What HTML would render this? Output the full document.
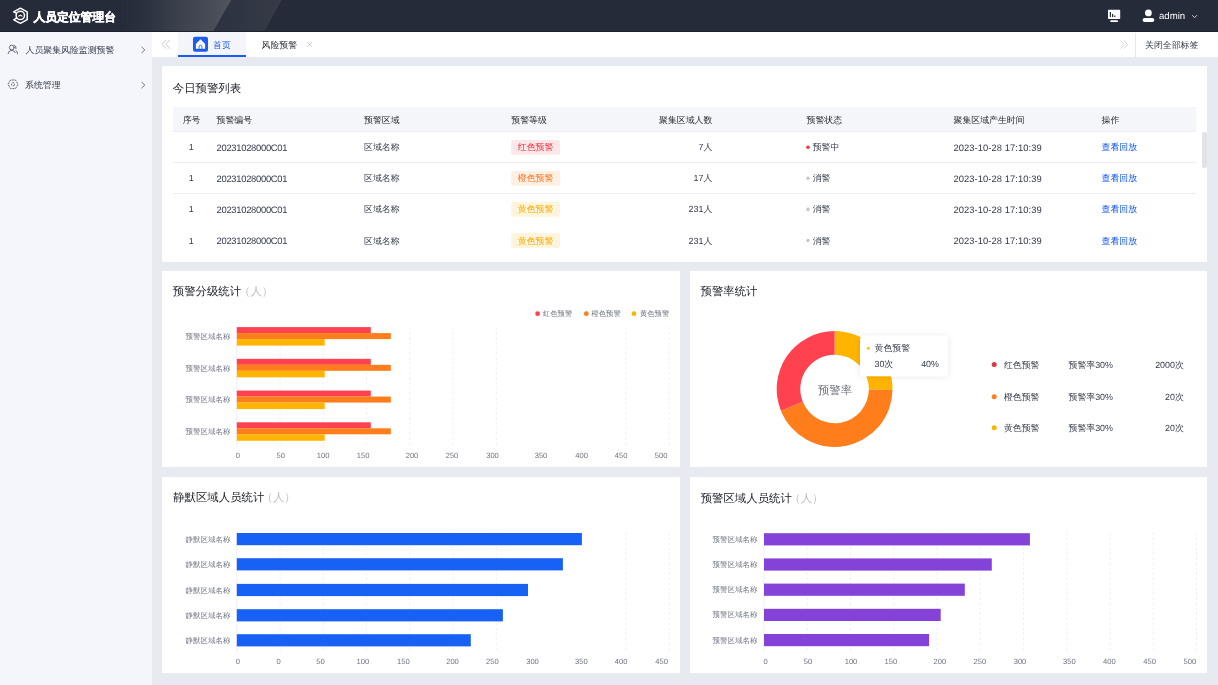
<!DOCTYPE html><html><head><meta charset="utf-8"><style>
html,body{margin:0;padding:0;width:1218px;height:685px;overflow:hidden;background:#e7eaf0;font-family:"Liberation Sans",sans-serif;}
.b{position:absolute;}
svg{position:absolute;left:0;top:0;will-change:transform;}
text{font-family:"Liberation Sans",sans-serif;text-rendering:geometricPrecision;}
</style></head><body>
<div class="b" style="left:0px;top:0px;width:1218px;height:32px;background:#262b39;"></div>
<div class="b" style="left:0px;top:32px;width:152px;height:653px;background:#f4f6fb;"></div>
<div class="b" style="left:152px;top:32px;width:1066px;height:25px;background:#ffffff;"></div>
<div class="b" style="left:178px;top:32px;width:68px;height:25px;background:#f3f5fa;"></div>
<div class="b" style="left:178px;top:55px;width:68px;height:2px;background:#1d5cf0;"></div>
<div class="b" style="left:1135px;top:33px;width:1px;height:24px;background:#e6e8ee;"></div>
<div class="b" style="left:162px;top:66px;width:1045px;height:196px;background:#ffffff;"></div>
<div class="b" style="left:162px;top:271px;width:518px;height:196px;background:#ffffff;"></div>
<div class="b" style="left:690px;top:271px;width:517px;height:196px;background:#ffffff;"></div>
<div class="b" style="left:162px;top:477px;width:518px;height:196px;background:#ffffff;"></div>
<div class="b" style="left:690px;top:477px;width:517px;height:196px;background:#ffffff;"></div>
<div class="b" style="left:173px;top:107px;width:1023px;height:24.400000000000006px;background:#f5f6fa;"></div>
<div class="b" style="left:173px;top:130.7px;width:1023px;height:1.0px;background:#eceef3;"></div>
<div class="b" style="left:173px;top:161.8px;width:1023px;height:1.0px;background:#eceef3;"></div>
<div class="b" style="left:173px;top:192.5px;width:1023px;height:1.0px;background:#eceef3;"></div>
<div class="b" style="left:1202.2px;top:131.8px;width:4.399999999999864px;height:36.099999999999994px;background:#e2e3e6;border-radius:2px;"></div>
<svg width="1218" height="685" viewBox="0 0 1218 685"><defs>
<linearGradient id="g1" x1="0" y1="0" x2="1" y2="0"><stop offset="0" stop-color="#262b39" stop-opacity="0"/><stop offset="0.45" stop-color="#363b48"/><stop offset="1" stop-color="#4f545e"/></linearGradient>
<linearGradient id="g2" x1="0" y1="0" x2="1" y2="0"><stop offset="0" stop-color="#2c3140"/><stop offset="1" stop-color="#363b47"/></linearGradient>
</defs><polygon points="110,0 231.5,0 213,32 110,32" fill="url(#g1)"/><polygon points="231.5,0 281.7,0 264,32 213,32" fill="url(#g2)"/><rect x="0" y="31" width="1218" height="1" fill="#1d212d"/><g fill="none" stroke="#fff" stroke-width="1.5" stroke-linejoin="round" stroke-linecap="round"><path d="M16.3 13.1 L13.6 11.8 L20.4 8.2 L27.2 11.8 L27.2 19.7 L20.4 23.3 L13.8 19.8 L16.8 17.9"/><circle cx="20.3" cy="15.4" r="4.2"/></g><path d="M18.3 16.2 Q20.3 13.6 22.4 16.2 Q20.3 15.3 18.3 16.2Z" fill="#fff" stroke="#fff" stroke-width="0.6"/><text x="33.4" y="16.5" font-size="11.8" fill="#ffffff" text-anchor="start" dominant-baseline="central" font-weight="bold" stroke="#fff" stroke-width="0.35">人员定位管理台</text><rect x="1108" y="9.8" width="12.2" height="9.2" fill="#fff" rx="0.8"/><rect x="1110.2" y="20.2" width="7.8" height="1.9" fill="#fff" rx="0.9"/><rect x="1109.8" y="12" width="1.2" height="5" fill="#262b39"/><rect x="1112" y="14" width="1.2" height="3" fill="#262b39"/><rect x="1114.2" y="15.5" width="1.2" height="1.5" fill="#262b39"/><circle cx="1148.4" cy="12.9" r="3.4" fill="#fff"/><rect x="1142.6" y="17.9" width="11.7" height="4.2" rx="2.1" fill="#fff"/><text x="1159" y="16.5" font-size="9.6" fill="#ffffff" text-anchor="start" dominant-baseline="central" font-weight="normal" >admin</text><path d="M1192.2 15.2 L1194.6 17.6 L1197 15.2" fill="none" stroke="#fff" stroke-width="0.8"/><g fill="none" stroke="#4a5060" stroke-width="0.85" stroke-linecap="round"><circle cx="11.8" cy="47.5" r="2.4"/><path d="M8.1 53.6 Q8.5 50.4 11.8 50.3 Q14.4 50.4 15.2 52.6"/><path d="M14.5 45.2 Q16.4 46 16 48.6"/><path d="M16.1 50.6 Q17.3 51.6 17.6 53.8"/></g><text x="25.6" y="50.4" font-size="8.9" fill="#333948" text-anchor="start" dominant-baseline="central" font-weight="normal" >人员聚集风险监测预警</text><path d="M141.5 46.8 L144.8 49.9 L141.5 53" fill="none" stroke="#50555f" stroke-width="0.8"/><g fill="none" stroke="#4a5060" stroke-width="0.85" stroke-dasharray="2.2,0.8"><path d="M8 84.3 L10.5 80 L15.5 80 L18 84.3 L15.5 88.6 L10.5 88.6 Z"/><circle cx="13" cy="84.3" r="1.6"/></g><text x="25" y="85.3" font-size="8.9" fill="#333948" text-anchor="start" dominant-baseline="central" font-weight="normal" >系统管理</text><path d="M141.5 82 L144.8 85.1 L141.5 88.2" fill="none" stroke="#50555f" stroke-width="0.8"/><path d="M166.4 40 L162 44.3 L166.4 48.6 M170 40 L165.6 44.3 L170 48.6" fill="none" stroke="#b8bcc6" stroke-width="0.8"/><rect x="193" y="36.8" width="15" height="15" rx="2" fill="#1d5cf0"/><path d="M195.9 44.1 L200.5 39.3 L205.1 44.1 L205.1 48.8 L195.9 48.8Z" fill="#fff"/><path d="M199.1 48.8 L199.1 46.3 Q199.1 45.3 200.5 45.3 Q201.9 45.3 201.9 46.3 L201.9 48.8" fill="none" stroke="#1d5cf0" stroke-width="0.9"/><text x="213" y="45" font-size="8.9" fill="#1d5cf0" text-anchor="start" dominant-baseline="central" font-weight="normal" >首页</text><text x="261.6" y="44.8" font-size="8.9" fill="#1f2329" text-anchor="start" dominant-baseline="central" font-weight="normal" >风险预警</text><path d="M307.3 42 L312 46.8 M312 42 L307.3 46.8" stroke="#b8bcc6" stroke-width="0.8"/><path d="M1120.5 40.5 L1124 44.5 L1120.5 48.5 M1124 40.5 L1127.5 44.5 L1124 48.5" fill="none" stroke="#c4c8d0" stroke-width="0.8"/><text x="1145" y="45" font-size="8.9" fill="#333948" text-anchor="start" dominant-baseline="central" font-weight="normal" >关闭全部标签</text><text x="172.8" y="88.5" font-size="11.4" fill="#1a1d24" text-anchor="start" dominant-baseline="central" font-weight="normal" >今日预警列表</text><text x="182.7" y="119.8" font-size="8.9" fill="#1f2329" text-anchor="start" dominant-baseline="central" font-weight="normal" >序号</text><text x="216.5" y="119.8" font-size="8.9" fill="#1f2329" text-anchor="start" dominant-baseline="central" font-weight="normal" >预警编号</text><text x="364" y="119.8" font-size="8.9" fill="#1f2329" text-anchor="start" dominant-baseline="central" font-weight="normal" >预警区域</text><text x="511.3" y="119.8" font-size="8.9" fill="#1f2329" text-anchor="start" dominant-baseline="central" font-weight="normal" >预警等级</text><text x="806.5" y="119.8" font-size="8.9" fill="#1f2329" text-anchor="start" dominant-baseline="central" font-weight="normal" >预警状态</text><text x="953.5" y="119.8" font-size="8.9" fill="#1f2329" text-anchor="start" dominant-baseline="central" font-weight="normal" >聚集区域产生时间</text><text x="1101.5" y="119.8" font-size="8.9" fill="#1f2329" text-anchor="start" dominant-baseline="central" font-weight="normal" >操作</text><text x="712.3" y="119.8" font-size="8.9" fill="#1f2329" text-anchor="end" dominant-baseline="central" font-weight="normal" >聚集区域人数</text><text x="191.3" y="147.3" font-size="8.9" fill="#333948" text-anchor="middle" dominant-baseline="central" font-weight="normal" >1</text><text x="216.5" y="147.3" font-size="9.4" fill="#333948" text-anchor="start" dominant-baseline="central" font-weight="normal"  textLength="71" lengthAdjust="spacing">20231028000C01</text><text x="364" y="147.3" font-size="8.9" fill="#333948" text-anchor="start" dominant-baseline="central" font-weight="normal" >区域名称</text><rect x="511.1" y="139.9" width="49" height="14.8" rx="2" fill="#fde7e9"/><text x="535.6" y="147.3" font-size="8.9" fill="#f02e3e" text-anchor="middle" dominant-baseline="central" font-weight="normal" >红色预警</text><text x="712.3" y="147.3" font-size="8.9" fill="#333948" text-anchor="end" dominant-baseline="central" font-weight="normal" >7人</text><circle cx="808" cy="147.3" r="1.8" fill="#f5353f"/><text x="812.7" y="147.3" font-size="8.9" fill="#333948" text-anchor="start" dominant-baseline="central" font-weight="normal" >预警中</text><text x="953.5" y="147.3" font-size="9.4" fill="#333948" text-anchor="start" dominant-baseline="central" font-weight="normal"  textLength="88.2" lengthAdjust="spacing">2023-10-28 17:10:39</text><text x="1101.5" y="147.3" font-size="8.9" fill="#0f55f0" text-anchor="start" dominant-baseline="central" font-weight="normal" >查看回放</text><text x="191.3" y="178.3" font-size="8.9" fill="#333948" text-anchor="middle" dominant-baseline="central" font-weight="normal" >1</text><text x="216.5" y="178.3" font-size="9.4" fill="#333948" text-anchor="start" dominant-baseline="central" font-weight="normal"  textLength="71" lengthAdjust="spacing">20231028000C01</text><text x="364" y="178.3" font-size="8.9" fill="#333948" text-anchor="start" dominant-baseline="central" font-weight="normal" >区域名称</text><rect x="511.1" y="170.9" width="49" height="14.8" rx="2" fill="#fff0e3"/><text x="535.6" y="178.3" font-size="8.9" fill="#fa7014" text-anchor="middle" dominant-baseline="central" font-weight="normal" >橙色预警</text><text x="712.3" y="178.3" font-size="8.9" fill="#333948" text-anchor="end" dominant-baseline="central" font-weight="normal" >17人</text><circle cx="808" cy="178.3" r="1.8" fill="#c5c8d0"/><text x="812.7" y="178.3" font-size="8.9" fill="#333948" text-anchor="start" dominant-baseline="central" font-weight="normal" >消警</text><text x="953.5" y="178.3" font-size="9.4" fill="#333948" text-anchor="start" dominant-baseline="central" font-weight="normal"  textLength="88.2" lengthAdjust="spacing">2023-10-28 17:10:39</text><text x="1101.5" y="178.3" font-size="8.9" fill="#0f55f0" text-anchor="start" dominant-baseline="central" font-weight="normal" >查看回放</text><text x="191.3" y="209.4" font-size="8.9" fill="#333948" text-anchor="middle" dominant-baseline="central" font-weight="normal" >1</text><text x="216.5" y="209.4" font-size="9.4" fill="#333948" text-anchor="start" dominant-baseline="central" font-weight="normal"  textLength="71" lengthAdjust="spacing">20231028000C01</text><text x="364" y="209.4" font-size="8.9" fill="#333948" text-anchor="start" dominant-baseline="central" font-weight="normal" >区域名称</text><rect x="511.1" y="202.0" width="49" height="14.8" rx="2" fill="#fff5dc"/><text x="535.6" y="209.4" font-size="8.9" fill="#f7a800" text-anchor="middle" dominant-baseline="central" font-weight="normal" >黄色预警</text><text x="712.3" y="209.4" font-size="8.9" fill="#333948" text-anchor="end" dominant-baseline="central" font-weight="normal" >231人</text><circle cx="808" cy="209.4" r="1.8" fill="#c5c8d0"/><text x="812.7" y="209.4" font-size="8.9" fill="#333948" text-anchor="start" dominant-baseline="central" font-weight="normal" >消警</text><text x="953.5" y="209.4" font-size="9.4" fill="#333948" text-anchor="start" dominant-baseline="central" font-weight="normal"  textLength="88.2" lengthAdjust="spacing">2023-10-28 17:10:39</text><text x="1101.5" y="209.4" font-size="8.9" fill="#0f55f0" text-anchor="start" dominant-baseline="central" font-weight="normal" >查看回放</text><text x="191.3" y="240.5" font-size="8.9" fill="#333948" text-anchor="middle" dominant-baseline="central" font-weight="normal" >1</text><text x="216.5" y="240.5" font-size="9.4" fill="#333948" text-anchor="start" dominant-baseline="central" font-weight="normal"  textLength="71" lengthAdjust="spacing">20231028000C01</text><text x="364" y="240.5" font-size="8.9" fill="#333948" text-anchor="start" dominant-baseline="central" font-weight="normal" >区域名称</text><rect x="511.1" y="233.1" width="49" height="14.8" rx="2" fill="#fff5dc"/><text x="535.6" y="240.5" font-size="8.9" fill="#f7a800" text-anchor="middle" dominant-baseline="central" font-weight="normal" >黄色预警</text><text x="712.3" y="240.5" font-size="8.9" fill="#333948" text-anchor="end" dominant-baseline="central" font-weight="normal" >231人</text><circle cx="808" cy="240.5" r="1.8" fill="#c5c8d0"/><text x="812.7" y="240.5" font-size="8.9" fill="#333948" text-anchor="start" dominant-baseline="central" font-weight="normal" >消警</text><text x="953.5" y="240.5" font-size="9.4" fill="#333948" text-anchor="start" dominant-baseline="central" font-weight="normal"  textLength="88.2" lengthAdjust="spacing">2023-10-28 17:10:39</text><text x="1101.5" y="240.5" font-size="8.9" fill="#0f55f0" text-anchor="start" dominant-baseline="central" font-weight="normal" >查看回放</text><text x="172.8" y="292.2" font-size="11.4" fill="#1a1d24" text-anchor="start" dominant-baseline="central" font-weight="normal" >预警分级统计</text><text x="239" y="292.2" font-size="11.4" fill="#b9bdc6" text-anchor="start" dominant-baseline="central" font-weight="normal" >（人）</text><circle cx="537.6" cy="313.7" r="2.4" fill="#ff4150"/><text x="543" y="313.9" font-size="7.3" fill="#6e7380" text-anchor="start" dominant-baseline="central" font-weight="normal" >红色预警</text><circle cx="586.3" cy="313.7" r="2.4" fill="#ff7d1a"/><text x="591.5" y="313.9" font-size="7.3" fill="#6e7380" text-anchor="start" dominant-baseline="central" font-weight="normal" >橙色预警</text><circle cx="634" cy="313.7" r="2.4" fill="#ffb400"/><text x="640" y="313.9" font-size="7.3" fill="#6e7380" text-anchor="start" dominant-baseline="central" font-weight="normal" >黄色预警</text><line x1="280.05" y1="327.2" x2="280.05" y2="446.6" stroke="#e6e8ee" stroke-width="0.7" stroke-dasharray="2.5,2.5"/><line x1="323.3" y1="327.2" x2="323.3" y2="446.6" stroke="#e6e8ee" stroke-width="0.7" stroke-dasharray="2.5,2.5"/><line x1="366.55" y1="327.2" x2="366.55" y2="446.6" stroke="#e6e8ee" stroke-width="0.7" stroke-dasharray="2.5,2.5"/><line x1="409.8" y1="327.2" x2="409.8" y2="446.6" stroke="#e6e8ee" stroke-width="0.7" stroke-dasharray="2.5,2.5"/><line x1="453.05" y1="327.2" x2="453.05" y2="446.6" stroke="#e6e8ee" stroke-width="0.7" stroke-dasharray="2.5,2.5"/><line x1="496.3" y1="327.2" x2="496.3" y2="446.6" stroke="#e6e8ee" stroke-width="0.7" stroke-dasharray="2.5,2.5"/><line x1="626.05" y1="327.2" x2="626.05" y2="446.6" stroke="#e6e8ee" stroke-width="0.7" stroke-dasharray="2.5,2.5"/><line x1="669.3" y1="327.2" x2="669.3" y2="446.6" stroke="#e6e8ee" stroke-width="0.7" stroke-dasharray="2.5,2.5"/><line x1="236.8" y1="327.2" x2="236.8" y2="446.6" stroke="#e6e8ee" stroke-width="0.7"/><rect x="236.8" y="327.1" width="134.0" height="6" fill="#ff4150"/><rect x="236.8" y="333.1" width="154.0" height="6" fill="#ff7d1a"/><rect x="236.8" y="339.1" width="87.89999999999998" height="6.5" fill="#ffb400"/><text x="230.4" y="336.40000000000003" font-size="7.5" fill="#6e7380" text-anchor="end" dominant-baseline="central" font-weight="normal" >预警区域名称</text><rect x="236.8" y="358.83000000000004" width="134.0" height="6" fill="#ff4150"/><rect x="236.8" y="364.83000000000004" width="154.0" height="6" fill="#ff7d1a"/><rect x="236.8" y="370.83000000000004" width="87.89999999999998" height="6.5" fill="#ffb400"/><text x="230.4" y="368.13000000000005" font-size="7.5" fill="#6e7380" text-anchor="end" dominant-baseline="central" font-weight="normal" >预警区域名称</text><rect x="236.8" y="390.56" width="134.0" height="6" fill="#ff4150"/><rect x="236.8" y="396.56" width="154.0" height="6" fill="#ff7d1a"/><rect x="236.8" y="402.56" width="87.89999999999998" height="6.5" fill="#ffb400"/><text x="230.4" y="399.86" font-size="7.5" fill="#6e7380" text-anchor="end" dominant-baseline="central" font-weight="normal" >预警区域名称</text><rect x="236.8" y="422.29" width="134.0" height="6" fill="#ff4150"/><rect x="236.8" y="428.29" width="154.0" height="6" fill="#ff7d1a"/><rect x="236.8" y="434.29" width="87.89999999999998" height="6.5" fill="#ffb400"/><text x="230.4" y="431.59000000000003" font-size="7.5" fill="#6e7380" text-anchor="end" dominant-baseline="central" font-weight="normal" >预警区域名称</text><text x="237.8" y="455.3" font-size="7.6" fill="#6e7380" text-anchor="middle" dominant-baseline="central" font-weight="normal" >0</text><text x="280.7" y="455.3" font-size="7.6" fill="#6e7380" text-anchor="middle" dominant-baseline="central" font-weight="normal" >50</text><text x="323.2" y="455.3" font-size="7.6" fill="#6e7380" text-anchor="middle" dominant-baseline="central" font-weight="normal" >100</text><text x="363.2" y="455.3" font-size="7.6" fill="#6e7380" text-anchor="middle" dominant-baseline="central" font-weight="normal" >150</text><text x="412" y="455.3" font-size="7.6" fill="#6e7380" text-anchor="middle" dominant-baseline="central" font-weight="normal" >200</text><text x="452" y="455.3" font-size="7.6" fill="#6e7380" text-anchor="middle" dominant-baseline="central" font-weight="normal" >250</text><text x="492.5" y="455.3" font-size="7.6" fill="#6e7380" text-anchor="middle" dominant-baseline="central" font-weight="normal" >300</text><text x="541" y="455.3" font-size="7.6" fill="#6e7380" text-anchor="middle" dominant-baseline="central" font-weight="normal" >350</text><text x="581.7" y="455.3" font-size="7.6" fill="#6e7380" text-anchor="middle" dominant-baseline="central" font-weight="normal" >400</text><text x="621.2" y="455.3" font-size="7.6" fill="#6e7380" text-anchor="middle" dominant-baseline="central" font-weight="normal" >450</text><text x="661.2" y="455.3" font-size="7.6" fill="#6e7380" text-anchor="middle" dominant-baseline="central" font-weight="normal" >500</text><text x="700.5" y="292.2" font-size="11.4" fill="#1a1d24" text-anchor="start" dominant-baseline="central" font-weight="normal" >预警率统计</text><text x="9999" y="292.2" font-size="11.4" fill="#b9bdc6" text-anchor="start" dominant-baseline="central" font-weight="normal" >（人）</text><path d="M834.60 331.10 A57.9 57.9 0 0 1 892.49 390.01 L868.89 389.60 A34.3 34.3 0 0 0 834.60 354.70Z" fill="#ffb400"/><path d="M892.49 390.01 A57.9 57.9 0 0 1 780.92 410.69 L802.80 401.85 A34.3 34.3 0 0 0 868.89 389.60Z" fill="#ff7d1a"/><path d="M780.92 410.69 A57.9 57.9 0 0 1 834.60 331.10 L834.60 354.70 A34.3 34.3 0 0 0 802.80 401.85Z" fill="#ff4150"/><text x="835" y="390.6" font-size="11.4" fill="#6e7380" text-anchor="middle" dominant-baseline="central" font-weight="normal" >预警率</text><defs><filter id="sh" x="-30%" y="-50%" width="160%" height="200%"><feDropShadow dx="0" dy="0.5" stdDeviation="3" flood-color="#000" flood-opacity="0.10"/></filter></defs><rect x="860" y="335.8" width="88" height="40.4" rx="4" fill="#fff" filter="url(#sh)"/><circle cx="868.4" cy="348.3" r="1.5" fill="#f2c21e"/><text x="874.5" y="348.2" font-size="8.9" fill="#333948" text-anchor="start" dominant-baseline="central" font-weight="normal" >黄色预警</text><text x="874.5" y="363.8" font-size="8.9" fill="#333948" text-anchor="start" dominant-baseline="central" font-weight="normal" >30次</text><text x="938.9" y="363.8" font-size="8.9" fill="#333948" text-anchor="end" dominant-baseline="central" font-weight="normal" >40%</text><circle cx="994.2" cy="364.6" r="2.5" fill="#d93a40"/><text x="1003.9" y="364.6" font-size="8.9" fill="#333948" text-anchor="start" dominant-baseline="central" font-weight="normal" >红色预警</text><text x="1068.5" y="364.6" font-size="8.9" fill="#333948" text-anchor="start" dominant-baseline="central" font-weight="normal" >预警率30%</text><circle cx="994.2" cy="396.7" r="2.5" fill="#ff7d1a"/><text x="1003.9" y="396.7" font-size="8.9" fill="#333948" text-anchor="start" dominant-baseline="central" font-weight="normal" >橙色预警</text><text x="1068.5" y="396.7" font-size="8.9" fill="#333948" text-anchor="start" dominant-baseline="central" font-weight="normal" >预警率30%</text><circle cx="994.2" cy="427.7" r="2.5" fill="#ffb400"/><text x="1003.9" y="427.7" font-size="8.9" fill="#333948" text-anchor="start" dominant-baseline="central" font-weight="normal" >黄色预警</text><text x="1068.5" y="427.7" font-size="8.9" fill="#333948" text-anchor="start" dominant-baseline="central" font-weight="normal" >预警率30%</text><text x="1183.8" y="364.6" font-size="8.9" fill="#333948" text-anchor="end" dominant-baseline="central" font-weight="normal" >2000次</text><text x="1183.8" y="396.7" font-size="8.9" fill="#333948" text-anchor="end" dominant-baseline="central" font-weight="normal" >20次</text><text x="1183.8" y="427.7" font-size="8.9" fill="#333948" text-anchor="end" dominant-baseline="central" font-weight="normal" >20次</text><text x="173.2" y="498" font-size="11.4" fill="#1a1d24" text-anchor="start" dominant-baseline="central" font-weight="normal" >静默区域人员统计</text><text x="261.5" y="498" font-size="11.4" fill="#b9bdc6" text-anchor="start" dominant-baseline="central" font-weight="normal" >（人）</text><line x1="280.05" y1="532.5" x2="280.05" y2="652.7" stroke="#e6e8ee" stroke-width="0.7" stroke-dasharray="2.5,2.5"/><line x1="323.3" y1="532.5" x2="323.3" y2="652.7" stroke="#e6e8ee" stroke-width="0.7" stroke-dasharray="2.5,2.5"/><line x1="366.55" y1="532.5" x2="366.55" y2="652.7" stroke="#e6e8ee" stroke-width="0.7" stroke-dasharray="2.5,2.5"/><line x1="409.8" y1="532.5" x2="409.8" y2="652.7" stroke="#e6e8ee" stroke-width="0.7" stroke-dasharray="2.5,2.5"/><line x1="453.05" y1="532.5" x2="453.05" y2="652.7" stroke="#e6e8ee" stroke-width="0.7" stroke-dasharray="2.5,2.5"/><line x1="496.3" y1="532.5" x2="496.3" y2="652.7" stroke="#e6e8ee" stroke-width="0.7" stroke-dasharray="2.5,2.5"/><line x1="626.05" y1="532.5" x2="626.05" y2="652.7" stroke="#e6e8ee" stroke-width="0.7" stroke-dasharray="2.5,2.5"/><line x1="669.3" y1="532.5" x2="669.3" y2="652.7" stroke="#e6e8ee" stroke-width="0.7" stroke-dasharray="2.5,2.5"/><line x1="236.8" y1="532.5" x2="236.8" y2="652.7" stroke="#e6e8ee" stroke-width="0.7"/><rect x="236.8" y="533" width="345.09999999999997" height="12.2" fill="#1762f4"/><text x="230.4" y="539.1" font-size="7.5" fill="#6e7380" text-anchor="end" dominant-baseline="central" font-weight="normal" >静默区域名称</text><rect x="236.8" y="558.2" width="326.09999999999997" height="12.2" fill="#1762f4"/><text x="230.4" y="564.3000000000001" font-size="7.5" fill="#6e7380" text-anchor="end" dominant-baseline="central" font-weight="normal" >静默区域名称</text><rect x="236.8" y="583.9" width="291.2" height="12.2" fill="#1762f4"/><text x="230.4" y="590.0" font-size="7.5" fill="#6e7380" text-anchor="end" dominant-baseline="central" font-weight="normal" >静默区域名称</text><rect x="236.8" y="609.2" width="266.09999999999997" height="12.2" fill="#1762f4"/><text x="230.4" y="615.3000000000001" font-size="7.5" fill="#6e7380" text-anchor="end" dominant-baseline="central" font-weight="normal" >静默区域名称</text><rect x="236.8" y="634.2" width="234.0" height="12.2" fill="#1762f4"/><text x="230.4" y="640.3000000000001" font-size="7.5" fill="#6e7380" text-anchor="end" dominant-baseline="central" font-weight="normal" >静默区域名称</text><text x="237.9" y="661" font-size="7.6" fill="#6e7380" text-anchor="middle" dominant-baseline="central" font-weight="normal" >0</text><text x="278.5" y="661" font-size="7.6" fill="#6e7380" text-anchor="middle" dominant-baseline="central" font-weight="normal" >0</text><text x="320.5" y="661" font-size="7.6" fill="#6e7380" text-anchor="middle" dominant-baseline="central" font-weight="normal" >50</text><text x="362.8" y="661" font-size="7.6" fill="#6e7380" text-anchor="middle" dominant-baseline="central" font-weight="normal" >100</text><text x="403.3" y="661" font-size="7.6" fill="#6e7380" text-anchor="middle" dominant-baseline="central" font-weight="normal" >150</text><text x="452.5" y="661" font-size="7.6" fill="#6e7380" text-anchor="middle" dominant-baseline="central" font-weight="normal" >200</text><text x="492.3" y="661" font-size="7.6" fill="#6e7380" text-anchor="middle" dominant-baseline="central" font-weight="normal" >250</text><text x="532.5" y="661" font-size="7.6" fill="#6e7380" text-anchor="middle" dominant-baseline="central" font-weight="normal" >300</text><text x="581.4" y="661" font-size="7.6" fill="#6e7380" text-anchor="middle" dominant-baseline="central" font-weight="normal" >350</text><text x="621.2" y="661" font-size="7.6" fill="#6e7380" text-anchor="middle" dominant-baseline="central" font-weight="normal" >400</text><text x="661.7" y="661" font-size="7.6" fill="#6e7380" text-anchor="middle" dominant-baseline="central" font-weight="normal" >450</text><text x="700.7" y="498.9" font-size="11.4" fill="#1a1d24" text-anchor="start" dominant-baseline="central" font-weight="normal" >预警区域人员统计</text><text x="789.3" y="498.9" font-size="11.4" fill="#b9bdc6" text-anchor="start" dominant-baseline="central" font-weight="normal" >（人）</text><line x1="807.25" y1="532.5" x2="807.25" y2="652.7" stroke="#e6e8ee" stroke-width="0.7" stroke-dasharray="2.5,2.5"/><line x1="850.5" y1="532.5" x2="850.5" y2="652.7" stroke="#e6e8ee" stroke-width="0.7" stroke-dasharray="2.5,2.5"/><line x1="893.75" y1="532.5" x2="893.75" y2="652.7" stroke="#e6e8ee" stroke-width="0.7" stroke-dasharray="2.5,2.5"/><line x1="937.0" y1="532.5" x2="937.0" y2="652.7" stroke="#e6e8ee" stroke-width="0.7" stroke-dasharray="2.5,2.5"/><line x1="980.25" y1="532.5" x2="980.25" y2="652.7" stroke="#e6e8ee" stroke-width="0.7" stroke-dasharray="2.5,2.5"/><line x1="1023.5" y1="532.5" x2="1023.5" y2="652.7" stroke="#e6e8ee" stroke-width="0.7" stroke-dasharray="2.5,2.5"/><line x1="1066.75" y1="532.5" x2="1066.75" y2="652.7" stroke="#e6e8ee" stroke-width="0.7" stroke-dasharray="2.5,2.5"/><line x1="1110.0" y1="532.5" x2="1110.0" y2="652.7" stroke="#e6e8ee" stroke-width="0.7" stroke-dasharray="2.5,2.5"/><line x1="1153.25" y1="532.5" x2="1153.25" y2="652.7" stroke="#e6e8ee" stroke-width="0.7" stroke-dasharray="2.5,2.5"/><line x1="1196.5" y1="532.5" x2="1196.5" y2="652.7" stroke="#e6e8ee" stroke-width="0.7" stroke-dasharray="2.5,2.5"/><line x1="764" y1="532.5" x2="764" y2="652.7" stroke="#e6e8ee" stroke-width="0.7"/><rect x="764" y="533.2" width="265.9000000000001" height="12.2" fill="#8542d9"/><text x="757.4" y="539.3000000000001" font-size="7.5" fill="#6e7380" text-anchor="end" dominant-baseline="central" font-weight="normal" >预警区域名称</text><rect x="764" y="558.4" width="227.79999999999995" height="12.2" fill="#8542d9"/><text x="757.4" y="564.5" font-size="7.5" fill="#6e7380" text-anchor="end" dominant-baseline="central" font-weight="normal" >预警区域名称</text><rect x="764" y="583.6" width="200.79999999999995" height="12.2" fill="#8542d9"/><text x="757.4" y="589.7" font-size="7.5" fill="#6e7380" text-anchor="end" dominant-baseline="central" font-weight="normal" >预警区域名称</text><rect x="764" y="608.8" width="176.70000000000005" height="12.2" fill="#8542d9"/><text x="757.4" y="614.9" font-size="7.5" fill="#6e7380" text-anchor="end" dominant-baseline="central" font-weight="normal" >预警区域名称</text><rect x="764" y="634" width="165.10000000000002" height="12.2" fill="#8542d9"/><text x="757.4" y="640.1" font-size="7.5" fill="#6e7380" text-anchor="end" dominant-baseline="central" font-weight="normal" >预警区域名称</text><text x="765.7" y="661" font-size="7.6" fill="#6e7380" text-anchor="middle" dominant-baseline="central" font-weight="normal" >0</text><text x="808" y="661" font-size="7.6" fill="#6e7380" text-anchor="middle" dominant-baseline="central" font-weight="normal" >50</text><text x="851" y="661" font-size="7.6" fill="#6e7380" text-anchor="middle" dominant-baseline="central" font-weight="normal" >100</text><text x="890.8" y="661" font-size="7.6" fill="#6e7380" text-anchor="middle" dominant-baseline="central" font-weight="normal" >150</text><text x="939.8" y="661" font-size="7.6" fill="#6e7380" text-anchor="middle" dominant-baseline="central" font-weight="normal" >200</text><text x="979.8" y="661" font-size="7.6" fill="#6e7380" text-anchor="middle" dominant-baseline="central" font-weight="normal" >250</text><text x="1020" y="661" font-size="7.6" fill="#6e7380" text-anchor="middle" dominant-baseline="central" font-weight="normal" >300</text><text x="1069.4" y="661" font-size="7.6" fill="#6e7380" text-anchor="middle" dominant-baseline="central" font-weight="normal" >350</text><text x="1109.4" y="661" font-size="7.6" fill="#6e7380" text-anchor="middle" dominant-baseline="central" font-weight="normal" >400</text><text x="1149.6" y="661" font-size="7.6" fill="#6e7380" text-anchor="middle" dominant-baseline="central" font-weight="normal" >450</text><text x="1189.9" y="661" font-size="7.6" fill="#6e7380" text-anchor="middle" dominant-baseline="central" font-weight="normal" >500</text></svg>
</body></html>
